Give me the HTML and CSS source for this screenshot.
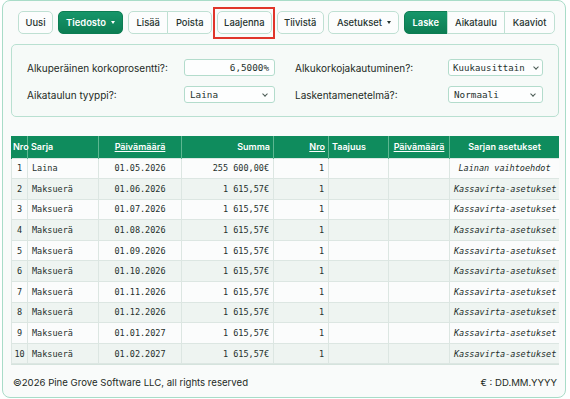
FILE: index.html
```html
<!DOCTYPE html>
<html lang="fi">
<head>
<meta charset="utf-8">
<title>Laskin</title>
<link rel="stylesheet" href="styles.css">
</head>
<body>
<div class="card">
  <div class="toolbar">
    <button class="btn">Uusi</button>
    <button class="btn btn-primary">Tiedosto <span class="caret"></span></button>
    <div class="group">
      <button class="btn">Lisää</button>
      <button class="btn">Poista</button>
    </div>
    <button class="btn highlight">Laajenna</button>
    <button class="btn">Tiivistä</button>
    <button class="btn btn-wide">Asetukset <span class="caret dark"></span></button>
    <div class="group">
      <button class="btn btn-primary">Laske</button>
      <button class="btn">Aikataulu</button>
      <button class="btn">Kaaviot</button>
    </div>
  </div>

  <div class="panel">
    <label class="label">Alkuperäinen korkoprosentti?:</label>
    <div class="input num">6,5000%</div>
    <label class="label">Alkukorkojakautuminen?:</label>
    <div class="input select narrow">Kuukausittain<span class="chev"></span></div>
    <label class="label">Aikataulun tyyppi?:</label>
    <div class="input select">Laina<span class="chev"></span></div>
    <label class="label">Laskentamenetelmä?:</label>
    <div class="input select">Normaali<span class="chev"></span></div>
  </div>

  <div class="table-wrap">
    <table class="grid">
      <colgroup>
        <col class="c-nro"><col class="c-sarja"><col class="c-date"><col class="c-sum">
        <col class="c-nro2"><col class="c-freq"><col class="c-date2"><col class="c-set">
      </colgroup>
      <thead>
        <tr>
          <th class="l first">Nro</th>
          <th class="l">Sarja</th>
          <th class="c"><a>Päivämäärä</a></th>
          <th class="r">Summa</th>
          <th class="r"><a>Nro</a></th>
          <th class="l">Taajuus</th>
          <th class="c"><a>Päivämäärä</a></th>
          <th class="c">Sarjan asetukset</th>
        </tr>
      </thead>
      <tbody>
        <tr><td class="c">1</td><td>Laina</td><td class="c">01.05.2026</td><td class="r">255 600,00€</td><td class="r">1</td><td></td><td></td><td class="c it">Lainan vaihtoehdot</td></tr>
        <tr><td class="c">2</td><td>Maksuerä</td><td class="c">01.06.2026</td><td class="r">1 615,57€</td><td class="r">1</td><td></td><td></td><td class="c it">Kassavirta-asetukset</td></tr>
        <tr><td class="c">3</td><td>Maksuerä</td><td class="c">01.07.2026</td><td class="r">1 615,57€</td><td class="r">1</td><td></td><td></td><td class="c it">Kassavirta-asetukset</td></tr>
        <tr><td class="c">4</td><td>Maksuerä</td><td class="c">01.08.2026</td><td class="r">1 615,57€</td><td class="r">1</td><td></td><td></td><td class="c it">Kassavirta-asetukset</td></tr>
        <tr><td class="c">5</td><td>Maksuerä</td><td class="c">01.09.2026</td><td class="r">1 615,57€</td><td class="r">1</td><td></td><td></td><td class="c it">Kassavirta-asetukset</td></tr>
        <tr><td class="c">6</td><td>Maksuerä</td><td class="c">01.10.2026</td><td class="r">1 615,57€</td><td class="r">1</td><td></td><td></td><td class="c it">Kassavirta-asetukset</td></tr>
        <tr><td class="c">7</td><td>Maksuerä</td><td class="c">01.11.2026</td><td class="r">1 615,57€</td><td class="r">1</td><td></td><td></td><td class="c it">Kassavirta-asetukset</td></tr>
        <tr><td class="c">8</td><td>Maksuerä</td><td class="c">01.12.2026</td><td class="r">1 615,57€</td><td class="r">1</td><td></td><td></td><td class="c it">Kassavirta-asetukset</td></tr>
        <tr><td class="c">9</td><td>Maksuerä</td><td class="c">01.01.2027</td><td class="r">1 615,57€</td><td class="r">1</td><td></td><td></td><td class="c it">Kassavirta-asetukset</td></tr>
        <tr><td class="c">10</td><td>Maksuerä</td><td class="c">01.02.2027</td><td class="r">1 615,57€</td><td class="r">1</td><td></td><td></td><td class="c it">Kassavirta-asetukset</td></tr>
        <tr class="partial"><td></td><td></td><td></td><td></td><td></td><td></td><td></td><td></td></tr>
      </tbody>
    </table>
  </div>

  <div class="footer">
    <span>©2026 Pine Grove Software LLC, all rights reserved</span>
    <span>€ : DD.MM.YYYY</span>
  </div>
</div>
</body>
</html>
```

FILE: styles.css
```css
* { box-sizing: border-box; }

html, body {
  margin: 0;
  padding: 0;
  background: #ffffff;
}

body {
  padding: 0 4px 1px 2px;
  font-family: Inter, "Noto Sans", sans-serif;
  color: #1d2a25;
}

.card {
  height: 398px;
  border: 1px solid #a9dcc8;
  border-radius: 8px;
  background: #f9fbfa;
  display: flex;
  flex-direction: column;
  padding: 0 6px 0 8px;
  overflow: hidden;
}

/* toolbar */
.toolbar {
  display: flex;
  align-items: center;
  gap: 4.6px;
  padding: 10px 0 0 7px;
  height: 33px;
}

.btn {
  font-family: Inter, "Noto Sans", sans-serif;
  font-size: 9.4px;
  font-weight: 500;
  height: 23px;
  padding: 0 6.5px;
  border: 1px solid #bfe0d3;
  border-radius: 5px;
  background: #fcfdfd;
  color: #25332e;
  display: inline-flex;
  align-items: center;
  gap: 4px;
  white-space: nowrap;
}

.btn-wide { padding: 0 7.5px; }

.btn-primary {
  background: linear-gradient(#16966a, #0c7d53);
  border-color: #0c7d53;
  color: #ffffff;
  font-weight: 600;
  padding: 0 7.5px;
}

.caret {
  width: 0;
  height: 0;
  border-left: 2.5px solid transparent;
  border-right: 2.5px solid transparent;
  border-top: 3px solid #ffffff;
  margin-left: 1px;
}
.caret.dark { border-top-color: #25332e; }

.group { display: flex; }
.group .btn { border-radius: 0; margin-left: -1px; padding: 0 7.5px; }
.group .btn:first-child { border-radius: 5px 0 0 5px; margin-left: 0; }
.group .btn:last-child { border-radius: 0 5px 5px 0; }

.highlight {
  position: relative;
}
.highlight::after {
  content: "";
  position: absolute;
  left: -5px;
  right: -4px;
  top: -5px;
  bottom: -6px;
  border: 2px solid #e0352a;
  pointer-events: none;
}

/* panel */
.panel {
  margin-top: 10px;
  height: 73px;
  border: 1px solid #b9e0d1;
  border-radius: 5px;
  background: #f6faf8;
  display: grid;
  grid-template-columns: 157px 91px 173px 95px;
  row-gap: 10px;
  padding: 14px 16px 0 15px;
  align-content: start;
  align-items: center;
}
.panel .label:nth-child(3),
.panel .label:nth-child(7) { margin-left: 20px; }

.label {
  font-size: 10px;
  color: #1d2a25;
  white-space: nowrap;
}

.input {
  height: 17px;
  border: 1px solid #b3dccc;
  border-radius: 3px;
  background: #fdfefe;
  font-family: "DejaVu Sans Mono", monospace;
  font-size: 9.3px;
  color: #26332e;
  display: flex;
  align-items: center;
  padding: 0 5px;
  position: relative;
}
.input.num { justify-content: flex-end; }
.input.narrow { padding-left: 4px; font-size: 9px; letter-spacing: 0.1px; }

.chev {
  position: absolute;
  right: 7px;
  top: 5px;
  width: 4px;
  height: 4px;
  border-right: 1px solid #4a5a54;
  border-bottom: 1px solid #4a5a54;
  transform: rotate(45deg);
}
.input.narrow .chev { right: 4px; }

/* table */
.table-wrap {
  margin-top: 19px;
  height: 229px;
  overflow: hidden;
  border-bottom: 1px solid #d5e3dd;
}

.grid {
  width: 548px;
  border-collapse: collapse;
  table-layout: fixed;
  font-family: "DejaVu Sans Mono", monospace;
  font-size: 8.5px;
  color: #25302c;
}

.c-nro { width: 16px; }
.c-sarja { width: 71px; }
.c-date { width: 83px; }
.c-sum { width: 92px; }
.c-nro2 { width: 55px; }
.c-freq { width: 60px; }
.c-date2 { width: 61px; }
.c-set { width: 110px; }

.grid th {
  height: 22px;
  background: #0f8c5d;
  color: #ffffff;
  font-family: Inter, "Noto Sans", sans-serif;
  font-size: 9px;
  font-weight: 600;
  border-left: 1px solid #5db791;
  border-right: 1px solid #5db791;
  padding: 0 3px;
  white-space: nowrap;
}
.grid th.first { padding: 0 0 0 1px; border-left-color: #0f8c5d; }
.grid th a { text-decoration: underline; color: #ffffff; }

.grid td {
  height: 20.6px;
  border: 1px solid #dce6e2;
  padding: 0 4px;
  white-space: nowrap;
  overflow: hidden;
}
.grid td:first-child { padding: 0 1px; }
.grid tbody tr:nth-child(odd) td { background: #fbfcfc; }
.grid tbody tr:nth-child(even) td { background: #eef4f1; }

.l { text-align: left; }
.c { text-align: center; }
.r { text-align: right; }
.it { font-style: italic; }

/* footer */
.footer {
  flex: 1;
  display: flex;
  align-items: center;
  justify-content: space-between;
  font-size: 9.6px;
  color: #1d2a25;
  padding: 3px 2px 0 2px;
}
```
